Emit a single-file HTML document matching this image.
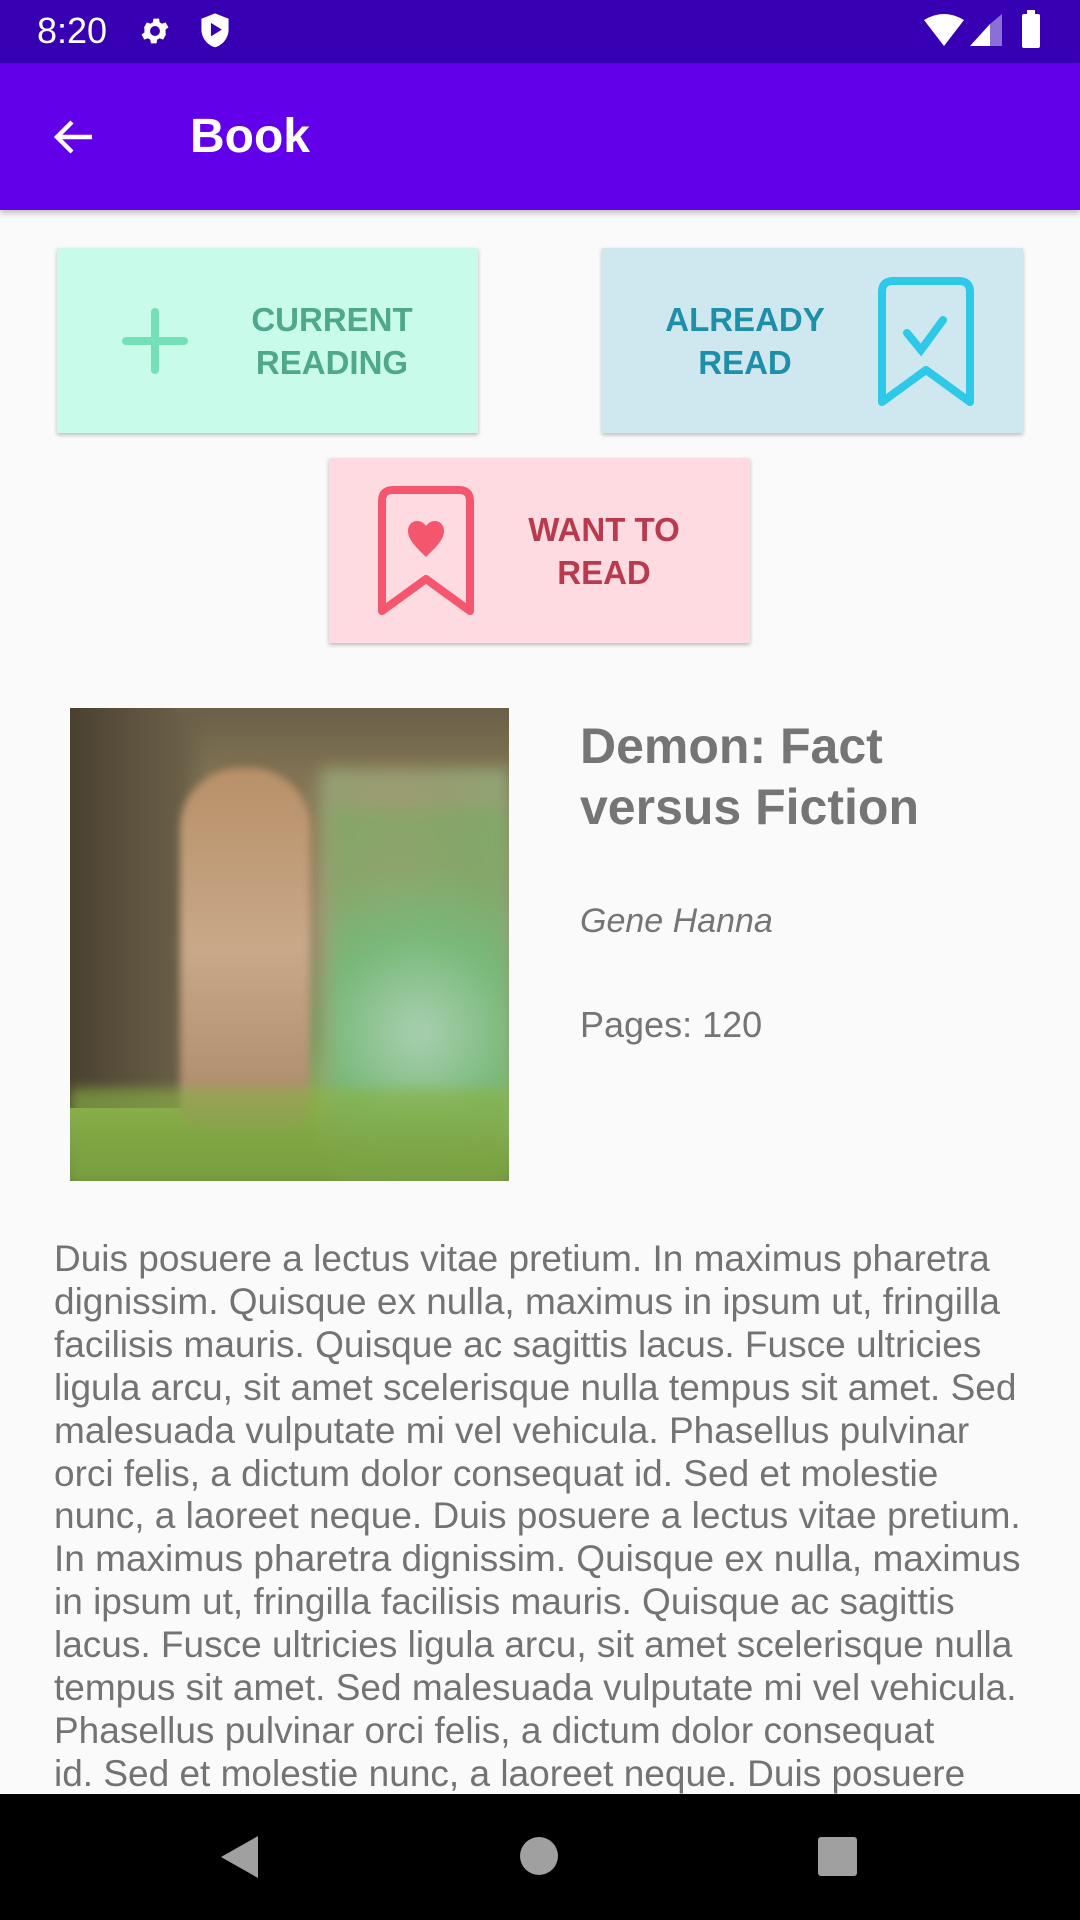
<!DOCTYPE html>
<html><head><meta charset="utf-8"><style>
*{margin:0;padding:0;box-sizing:border-box}
body{width:1080px;height:1920px;background:#fafafa;font-family:"Liberation Sans",Arial,sans-serif;position:relative;overflow:hidden}
.abs{position:absolute}
.status{left:0;top:0;width:1080px;height:63px;background:#3700b3}
.bar{left:0;top:63px;width:1080px;height:147px;background:#6200ea;box-shadow:0 3px 6px rgba(0,0,0,.25)}
.btn{position:absolute;height:185px;width:421px;box-shadow:0 2px 4px rgba(0,0,0,.25);font-size:33px;font-weight:bold;text-align:center;line-height:43px}
.btn .t{position:absolute;top:50%;transform:translateY(-50%)}
.desc{left:54px;top:1238px;color:#737373;font-size:37px;line-height:42.9px;white-space:nowrap}
.nav{left:0;top:1794px;width:1080px;height:126px;background:#000}
</style></head><body>
<div class="abs status">
 <div class="abs" style="left:37px;top:10px;color:#fff;font-size:36px;">8:20</div>
 <svg class="abs" style="left:138px;top:14px" width="34" height="34" viewBox="0 0 24 24"><path fill="#fff" d="M19.4 13c.04-.3.06-.6.06-1s-.02-.7-.07-1l2.1-1.6-2-3.5-2.5 1a7 7 0 0 0-1.7-1l-.4-2.6h-4l-.4 2.6c-.6.25-1.2.6-1.7 1l-2.5-1-2 3.5L4.6 11c-.04.3-.07.6-.07 1s.03.7.07 1l-2.1 1.6 2 3.5 2.5-1c.5.4 1.1.75 1.7 1l.4 2.6h4l.4-2.6c.6-.25 1.2-.6 1.7-1l2.5 1 2-3.5L19.4 13zM12 15.5A3.5 3.5 0 1 1 12 8.5a3.5 3.5 0 0 1 0 7z"/></svg>
 <svg class="abs" style="left:198px;top:12px" width="34" height="38" viewBox="0 0 24 28"><path fill="#fff" d="M12 1 2 5v8c0 6 4.3 11.5 10 13 5.7-1.5 10-7 10-13V5z"/><path fill="#3700b3" d="M9 8v10l8-5z"/></svg>
 <svg class="abs" style="left:924px;top:14px" width="40" height="34" viewBox="0 0 40 34"><path fill="#fff" d="M0 6Q20-6 40 6L20 32z"/></svg>
 <svg class="abs" style="left:970px;top:14px" width="32" height="34" viewBox="0 0 32 34"><path fill="#fff" d="M0 32 20 10V32z"/><path fill="#8b6fd6" d="M20 10 32 0V32H20z"/></svg>
 <div class="abs" style="left:1022px;top:14px;width:18px;height:34px;background:#fff;border-radius:2px"></div>
 <div class="abs" style="left:1027px;top:10px;width:8px;height:5px;background:#fff"></div>
</div>
<div class="abs bar">
 <svg class="abs" style="left:50px;top:50px" width="48" height="48" viewBox="0 0 24 24"><path fill="none" stroke="#fff" stroke-width="2.2" d="M21 12H4M11 4.5 3.5 12 11 19.5"/></svg>
 <div class="abs" style="left:190px;top:46px;color:#fff;font-size:48px;font-weight:bold;">Book</div>
</div>

<div class="btn" style="left:57px;top:248px;background:#c8fbea;color:#4fa88a">
 <svg class="abs" style="left:65px;top:60px" width="66" height="66" viewBox="0 0 66 66"><path stroke="#73e0b8" stroke-width="8" stroke-linecap="round" d="M33 4V62M4 33H62"/></svg>
 <div class="t" style="left:180px;width:190px">CURRENT<br>READING</div>
</div>
<div class="btn" style="left:602px;top:248px;background:#cfe7ee;color:#1e8fa8">
 <div class="t" style="left:48px;width:190px">ALREADY<br>READ</div>
 <svg class="abs" style="left:275px;top:28px" width="98" height="130" viewBox="0 0 98 130"><path fill="none" stroke="#2ec8e8" stroke-width="8" stroke-linejoin="round" d="M5 126V16Q5 5 16 5H82Q93 5 93 16V126L49 94z"/><path fill="none" stroke="#2ec8e8" stroke-width="8" stroke-linecap="round" d="M30 57 44 74 66 44"/></svg>
</div>
<div class="btn" style="left:329px;top:458px;background:#fddbe0;color:#b83a4e">
 <svg class="abs" style="left:48px;top:27px" width="98" height="130" viewBox="0 0 98 130"><path fill="none" stroke="#f4566d" stroke-width="8" stroke-linejoin="round" d="M5 126V16Q5 5 16 5H82Q93 5 93 16V126L49 94z"/><path fill="#f4566d" d="M49 72C40 63 31 55 31 46c0-6 4-10 9-10 4 0 7 2 9 5 2-3 5-5 9-5 5 0 9 4 9 10 0 9-9 17-18 26z"/></svg>
 <div class="t" style="left:180px;width:190px">WANT TO<br>READ</div>
</div>

<div class="abs" style="left:70px;top:708px;width:439px;height:473px;background:linear-gradient(180deg,#6a6048 0%,#8a7a58 20%,#9a8868 45%,#7a9a60 70%,#8aae50 85%,#6a8a40 100%);overflow:hidden">
 <div class="abs" style="left:0;top:0;width:140px;height:400px;background:linear-gradient(90deg,#4a4030,#6a6048 80%,transparent)"></div>
 <div class="abs" style="left:250px;top:60px;width:189px;height:380px;background:radial-gradient(ellipse at 40% 40%,#c0a080 0%,#9aa878 50%,#90b880 100%);opacity:.8;filter:blur(8px)"></div>
 <div class="abs" style="left:110px;top:60px;width:130px;height:360px;border-radius:60px 60px 20px 20px;background:linear-gradient(180deg,#b89068,#c8a888 50%,#a88868);filter:blur(4px)"></div>
 <div class="abs" style="left:260px;top:100px;width:179px;height:373px;background:radial-gradient(circle at 50% 60%,#a8d0b0 0%,#78b878 40%,rgba(120,170,100,.6) 70%);filter:blur(8px)"></div>
 <div class="abs" style="left:0;top:380px;width:439px;height:93px;background:linear-gradient(180deg,rgba(140,180,70,.6),#7aa040);filter:blur(6px)"></div>
</div>

<div class="abs" style="left:580px;top:716px;color:#757575;font-size:50px;font-weight:bold;line-height:61px">Demon: Fact<br>versus Fiction</div>
<div class="abs" style="left:580px;top:902px;color:#757575;font-size:34px;font-style:italic">Gene Hanna</div>
<div class="abs" style="left:580px;top:1004px;color:#757575;font-size:36px">Pages: 120</div>

<div class="abs desc">
<div>Duis posuere a lectus vitae pretium. In maximus pharetra</div>
<div>dignissim. Quisque ex nulla, maximus in ipsum ut, fringilla</div>
<div>facilisis mauris. Quisque ac sagittis lacus. Fusce ultricies</div>
<div>ligula arcu, sit amet scelerisque nulla tempus sit amet. Sed</div>
<div>malesuada vulputate mi vel vehicula. Phasellus pulvinar</div>
<div>orci felis, a dictum dolor consequat id. Sed et molestie</div>
<div>nunc, a laoreet neque. Duis posuere a lectus vitae pretium.</div>
<div>In maximus pharetra dignissim. Quisque ex nulla, maximus</div>
<div>in ipsum ut, fringilla facilisis mauris. Quisque ac sagittis</div>
<div>lacus. Fusce ultricies ligula arcu, sit amet scelerisque nulla</div>
<div>tempus sit amet. Sed malesuada vulputate mi vel vehicula.</div>
<div>Phasellus pulvinar orci felis, a dictum dolor consequat</div>
<div>id. Sed et molestie nunc, a laoreet neque. Duis posuere</div>
</div>

<div class="abs nav">
 <svg class="abs" style="left:218px;top:40px" width="42" height="46" viewBox="0 0 42 46"><path fill="#a0a0a0" d="M40 2V44L3 23z"/></svg>
 <div class="abs" style="left:520px;top:43px;width:38px;height:38px;border-radius:50%;background:#a0a0a0"></div>
 <div class="abs" style="left:818px;top:43px;width:39px;height:39px;border-radius:3px;background:#a0a0a0"></div>
</div>
</body></html>
